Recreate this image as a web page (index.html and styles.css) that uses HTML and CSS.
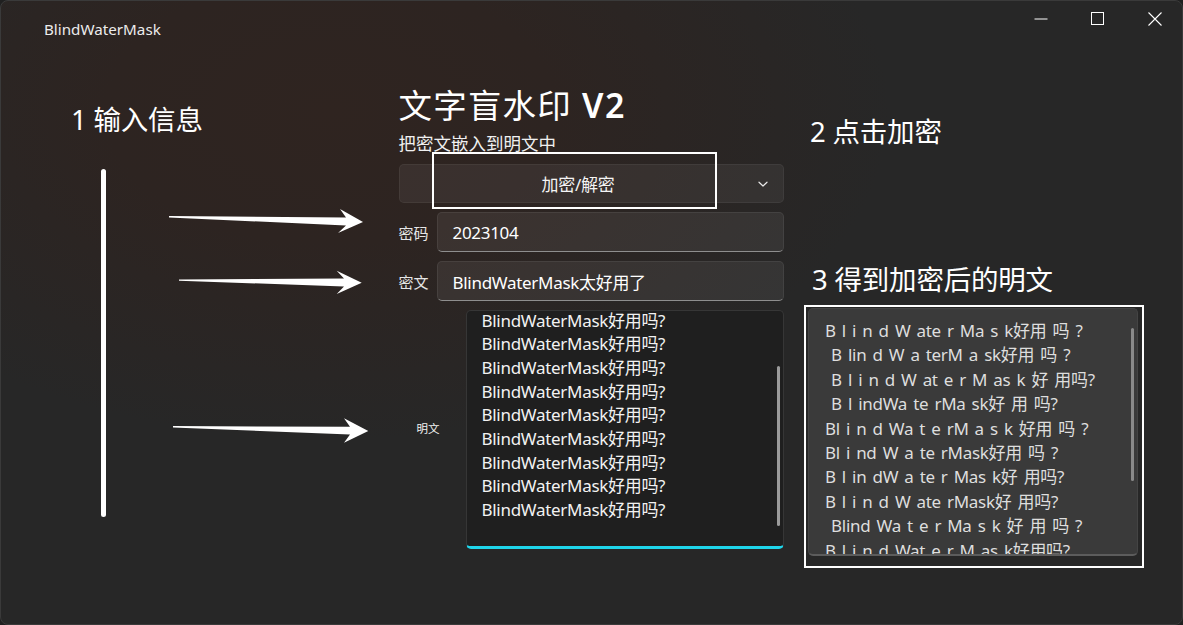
FILE: index.html
```html
<!DOCTYPE html>
<html lang="zh">
<head>
<meta charset="utf-8">
<title>BlindWaterMask</title>
<link rel="stylesheet" href="styles.css">
</head>
<body>
<div class="window">
  <header class="titlebar">
    <div class="app-title">BlindWaterMask</div>
    <div class="caption-buttons">
      <div class="cap-btn"><svg width="14" height="14" viewBox="0 0 14 14"><path d="M0.5 7h13" stroke="#fff" stroke-width="1"/></svg></div>
      <div class="cap-btn"><svg width="14" height="14" viewBox="0 0 14 14"><rect x="0.5" y="0.5" width="12" height="12" fill="none" stroke="#fff" stroke-width="1"/></svg></div>
      <div class="cap-btn"><svg width="14" height="14" viewBox="0 0 14 14"><path d="M0.5 0.5L13.5 13.5M13.5 0.5L0.5 13.5" stroke="#fff" stroke-width="1.1"/></svg></div>
    </div>
  </header>

  <main class="content">
    <section class="form">
      <h1 class="heading">文字盲水印 <span class="ver">V2</span></h1>
      <p class="subtitle">把密文嵌入到明文中</p>
      <div class="combo">
        <span class="combo-text">加密/解密</span>
        <svg class="chevron" width="12" height="8" viewBox="0 0 12 8"><path d="M2 2.2L6 6L10 2.2" fill="none" stroke="#e8e8e8" stroke-width="1.2" stroke-linecap="round" stroke-linejoin="round"/></svg>
      </div>
      <div class="field-row">
        <span class="lbl">密码</span>
        <div class="input">2023104</div>
      </div>
      <div class="field-row">
        <span class="lbl">密文</span>
        <div class="input">BlindWaterMask太好用了</div>
      </div>
      <div class="field-row tall">
        <span class="lbl lbl-small">明文</span>
        <div class="textarea">
          <div class="ta-lines">
            <div>BlindWaterMask好用吗?</div>
            <div>BlindWaterMask好用吗?</div>
            <div>BlindWaterMask好用吗?</div>
            <div>BlindWaterMask好用吗?</div>
            <div>BlindWaterMask好用吗?</div>
            <div>BlindWaterMask好用吗?</div>
            <div>BlindWaterMask好用吗?</div>
            <div>BlindWaterMask好用吗?</div>
            <div>BlindWaterMask好用吗?</div>
          </div>
          <div class="ta-scroll"></div>
        </div>
      </div>
    </section>
  </main>

  <!-- annotation layer -->
  <svg class="annot-svg" width="1183" height="625" viewBox="0 0 1183 625">
    <rect x="101" y="169" width="5" height="348" rx="2.5" fill="#fff"/>
    <polygon points="169,216.1 346,217.6 340,209 363,222 338,233 346,225.6 169,217.4" fill="#fff"/>
    <polygon points="179,279.5 344,278.6 336.7,270.7 361.7,282.7 336.7,294 344,286.4 179,280.8" fill="#fff"/>
    <polygon points="173,426.1 350,426.8 344,418.3 368.3,431 344,442.7 350,434.6 173,427.4" fill="#fff"/>
  </svg>
  <div class="annot-text step1">1 输入信息</div>
  <div class="annot-text step2">2 点击加密</div>
  <div class="annot-text step3">3 得到加密后的明文</div>
  <div class="annot-rect combo-mark"></div>
  <div class="annot-rect result-mark"></div>
  <div class="result-box">
    <div class="result-lines">
      <div>B l i n d W ate r Ma s k好用 吗 ?</div>
      <div> B lin d W a terM a sk好用 吗 ?</div>
      <div> B l i n d W at e r M as k 好 用吗?</div>
      <div> B l indWa te rMa sk好 用 吗?</div>
      <div>Bl i n d Wa t e rM a s k 好用 吗 ?</div>
      <div>Bl i nd W a te rMask好用 吗 ?</div>
      <div>B l in dW a te r Mas k好 用吗?</div>
      <div>B l i n d W ate rMask好 用吗?</div>
      <div> Blind Wa t e r Ma s k 好 用 吗 ?</div>
      <div>B l i n d Wat e r M as k好用吗?</div>
    </div>
    <div class="result-scroll"></div>
  </div>
</div>
</body>
</html>
```

FILE: styles.css
```css
* { box-sizing: border-box; }

html, body {
  margin: 0;
  padding: 0;
  background: #202020;
}

body {
  font-family: "Noto Sans", "Noto Sans CJK SC", sans-serif;
  color: #ffffff;
}

.window {
  position: relative;
  width: 1183px;
  height: 625px;
  overflow: hidden;
  border: 1px solid #3a3a3a;
  border-radius: 8px;
  background:
    radial-gradient(ellipse 560px 330px at 330px 110px, #2f2420 0%, #2d2421 40%, rgba(39,39,39,0) 100%),
    #272727;
  display: flex;
  flex-direction: column;
}

/* title bar */
.titlebar {
  display: flex;
  justify-content: space-between;
  align-items: flex-start;
  height: 37px;
  flex: none;
}

.app-title {
  margin-top: 19px;
  padding-left: 43px;
  font-size: 15.2px;
  line-height: 18px;
  color: #ececec;
}

.caption-buttons {
  display: flex;
  margin-top: -1px;
  margin-right: -1px;
}

.cap-btn {
  width: 57px;
  height: 38px;
  display: flex;
  align-items: center;
  justify-content: center;
}

/* main form */
.content {
  flex: 1;
  display: flex;
  justify-content: center;
}

.form {
  width: 385px;
  margin-top: 47px;
  margin-left: -1px;
  display: flex;
  flex-direction: column;
  letter-spacing: -0.3px;
}

.heading {
  margin: 0;
  font-size: 33.5px;
  line-height: 40px;
  font-weight: 400;
  letter-spacing: 1.2px;
  color: #ffffff;
}

.heading .ver {
  font-size: 34px;
  font-weight: 600;
  letter-spacing: 1.5px;
}

.subtitle {
  margin: 7px 0 0 0;
  font-size: 17.5px;
  line-height: 22px;
  color: #f0f0f0;
  letter-spacing: 0;
}

.combo {
  margin-top: 10px;
  height: 39px;
  display: flex;
  align-items: center;
  background: rgba(255, 255, 255, 0.058);
  border: 1px solid rgba(255, 255, 255, 0.05);
  border-radius: 5px;
}

.combo-text {
  flex: 1;
  text-align: center;
  font-size: 17px;
  color: #f4f4f4;
}

.chevron {
  margin-right: 14px;
}

.field-row {
  margin-top: 9px;
  height: 40px;
  display: flex;
  align-items: center;
}

.field-row.tall {
  height: 239px;
}

.lbl {
  width: 38px;
  flex: none;
  font-size: 15px;
  color: #e6e6e6;
  letter-spacing: 0;
}

.lbl-small {
  width: 67px;
  padding-left: 18px;
  padding-bottom: 3px;
  font-size: 11.5px;
  color: #f0f0f0;
}

.input {
  flex: 1;
  height: 40px;
  display: flex;
  align-items: center;
  padding-left: 15px;
  font-size: 17px;
  color: #ffffff;
  background: rgba(255, 255, 255, 0.065);
  border: 1px solid rgba(255, 255, 255, 0.07);
  border-bottom: 1px solid #8e8e8e;
  border-radius: 5px;
}

.textarea {
  position: relative;
  flex: 1;
  height: 239px;
  overflow: hidden;
  background: #1f1f1f;
  border: 1px solid #363636;
  border-bottom: 3px solid #1fd5ea;
  border-radius: 5px;
  padding-left: 15px;
}

.ta-lines {
  margin-top: -2.5px;
  font-size: 17px;
  line-height: 23.7px;
  color: #f2f2f2;
}

.ta-scroll {
  position: absolute;
  left: 310px;
  top: 55px;
  width: 3px;
  height: 160px;
  border-radius: 2px;
  background: #9b9b9b;
}

/* annotation overlay */
.annot-svg {
  position: absolute;
  left: -1px;
  top: -1px;
  pointer-events: none;
}

.annot-text {
  position: absolute;
  font-size: 27.5px;
  line-height: 36px;
  color: #ffffff;
  letter-spacing: -0.2px;
  white-space: nowrap;
}

.step1 { left: 70px; top: 101px; }
.step2 { left: 809px; top: 113px; }
.step3 { left: 811px; top: 261px; }

.annot-rect {
  position: absolute;
  border: 2px solid #ffffff;
}

.combo-mark {
  left: 431px;
  top: 151px;
  width: 285px;
  height: 57px;
}

.result-mark {
  left: 803px;
  top: 304px;
  width: 340px;
  height: 263px;
}

.result-box {
  position: absolute;
  left: 807px;
  top: 307px;
  width: 330px;
  height: 248px;
  overflow: hidden;
  background: #3a3a3a;
  border: 1px solid #444444;
  border-bottom: 2px solid #5c5c5c;
  border-radius: 5px;
  padding: 10px 0 0 16px;
}

.result-lines {
  font-size: 17px;
  line-height: 24.4px;
  color: #dedede;
  letter-spacing: -0.3px;
  word-spacing: 2px;
}

.result-lines > div {
  white-space: pre;
}

.result-scroll {
  position: absolute;
  left: 322px;
  top: 19px;
  width: 2.5px;
  height: 153px;
  border-radius: 2px;
  background: #8a8a8a;
}
```
